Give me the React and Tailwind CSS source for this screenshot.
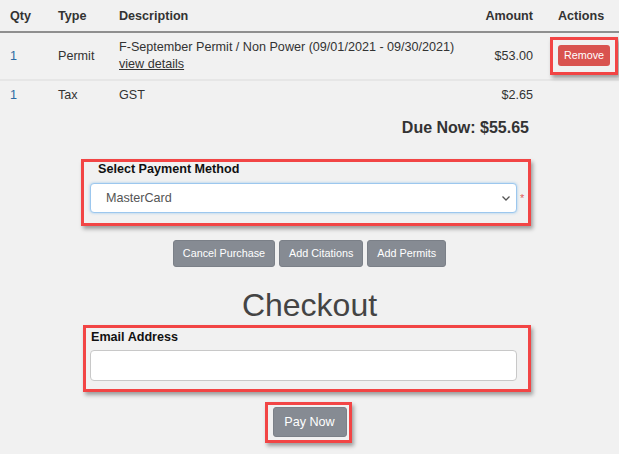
import React from 'react';

const items = [
  {
    qty: '1',
    type: 'Permit',
    desc: 'F-September Permit / Non Power (09/01/2021 - 09/30/2021)',
    details: true,
    amount: '$53.00',
    removable: true,
  },
  { qty: '1', type: 'Tax', desc: 'GST', amount: '$2.65' },
];

const highlight =
  'border-[3px] border-[#f24545] shadow-[2px_3px_4px_rgba(0,0,0,0.35)]';

const grayButton =
  'bg-[#868b93] border border-[#7b8088] text-white rounded-[3px]';

const Row = ({ item, last }) => (
  <div
    className={`flex items-center text-[12.6px] leading-[17px] text-[#333] py-[6px] ${
      last ? '' : 'border-b-2 border-[#e6e6e6]'
    }`}
  >
    <div className="w-[58px] pl-[10px] text-[#2d6aa3]">{item.qty}</div>
    <div className="w-[61px]">{item.type}</div>
    <div className="flex-1">
      <div>{item.desc}</div>
      {item.details && <div className="underline">view details</div>}
    </div>
    <div className="w-[80px] pr-[17px] text-right">{item.amount}</div>
    <div className="w-[69px]">
      {item.removable && (
        <div className={`${highlight} w-[68px] h-[38px] -my-[2px] pl-[5px] pt-[5px]`}>
          <button className="w-[52px] h-[21px] bg-[#d9534f] text-white text-[10.8px] leading-[21px] rounded-[3px]">
            Remove
          </button>
        </div>
      )}
    </div>
  </div>
);

export default function App() {
  return (
    <div
      className="w-[619px] h-[454px] bg-[#f1f1f1] overflow-hidden"
      style={{ fontFamily: '"Liberation Sans", Arial, sans-serif' }}
    >
      <div className="flex h-[33px] pt-[9px] leading-[15px] border-b-2 border-[#8f8f8f] text-[12.6px] font-bold text-[#333]">
        <div className="w-[58px] pl-[10px]">Qty</div>
        <div className="w-[61px]">Type</div>
        <div className="flex-1">Description</div>
        <div className="w-[80px] pr-[17px] text-right">Amount</div>
        <div className="w-[69px] pl-[8px]">Actions</div>
      </div>

      {items.map((item, i) => (
        <Row key={i} item={item} last={i === items.length - 1} />
      ))}

      <div className="mt-[8px] pr-[90px] text-right text-[16px] leading-[20px] font-bold text-[#333]">
        Due Now: $55.65
      </div>

      <div className={`${highlight} ml-[81px] mt-[21px] w-[450px] h-[67px] pl-[6px]`}>
        <div className="pl-[8px] text-[12.6px] leading-[15px] font-bold text-[#111]">
          Select Payment Method
        </div>
        <div className="flex items-center mt-[6px]">
          <div className="flex items-center justify-between w-[427px] h-[30px] bg-white border border-[#9cc7ee] rounded-[4px] shadow-[0_0_3px_rgba(102,175,233,0.6)] pl-[15px] pr-[5px]">
            <span className="text-[12.6px] text-[#555]">MasterCard</span>
            <svg width="10" height="10" viewBox="0 0 10 10" fill="none">
              <path d="M1.5 3.5 L5 7 L8.5 3.5" stroke="#555" strokeWidth="1.3" />
            </svg>
          </div>
          <span className="ml-[3px] text-[#e05a5a] text-[11px] leading-none">*</span>
        </div>
      </div>

      <div className="flex justify-center gap-[4px] mt-[14px] text-[10.8px]">
        <button className={`${grayButton} h-[27px] px-[9px]`}>Cancel Purchase</button>
        <button className={`${grayButton} h-[27px] px-[9px]`}>Add Citations</button>
        <button className={`${grayButton} h-[27px] px-[9px]`}>Add Permits</button>
      </div>

      <div className="mt-[20px] text-center text-[32px] leading-[37px] text-[#444]">
        Checkout
      </div>

      <div className={`${highlight} ml-[83px] mt-[1px] w-[448px] h-[67px] pl-[4px] pt-[2px]`}>
        <div className="pl-[1px] text-[12.6px] leading-[15px] font-bold text-[#111]">
          Email Address
        </div>
        <div className="mt-[5px] w-[427px] h-[31px] bg-white border border-[#c8c8c8] rounded-[4px]" />
      </div>

      <div className="flex justify-center mt-[10px]">
        <div className={`${highlight} w-[87px] h-[41px] pl-[5px] pt-[2px] ml-[-3px]`}>
          <button className={`${grayButton} w-[74px] h-[30px] text-[12.6px]`}>Pay Now</button>
        </div>
      </div>
    </div>
  );
}
